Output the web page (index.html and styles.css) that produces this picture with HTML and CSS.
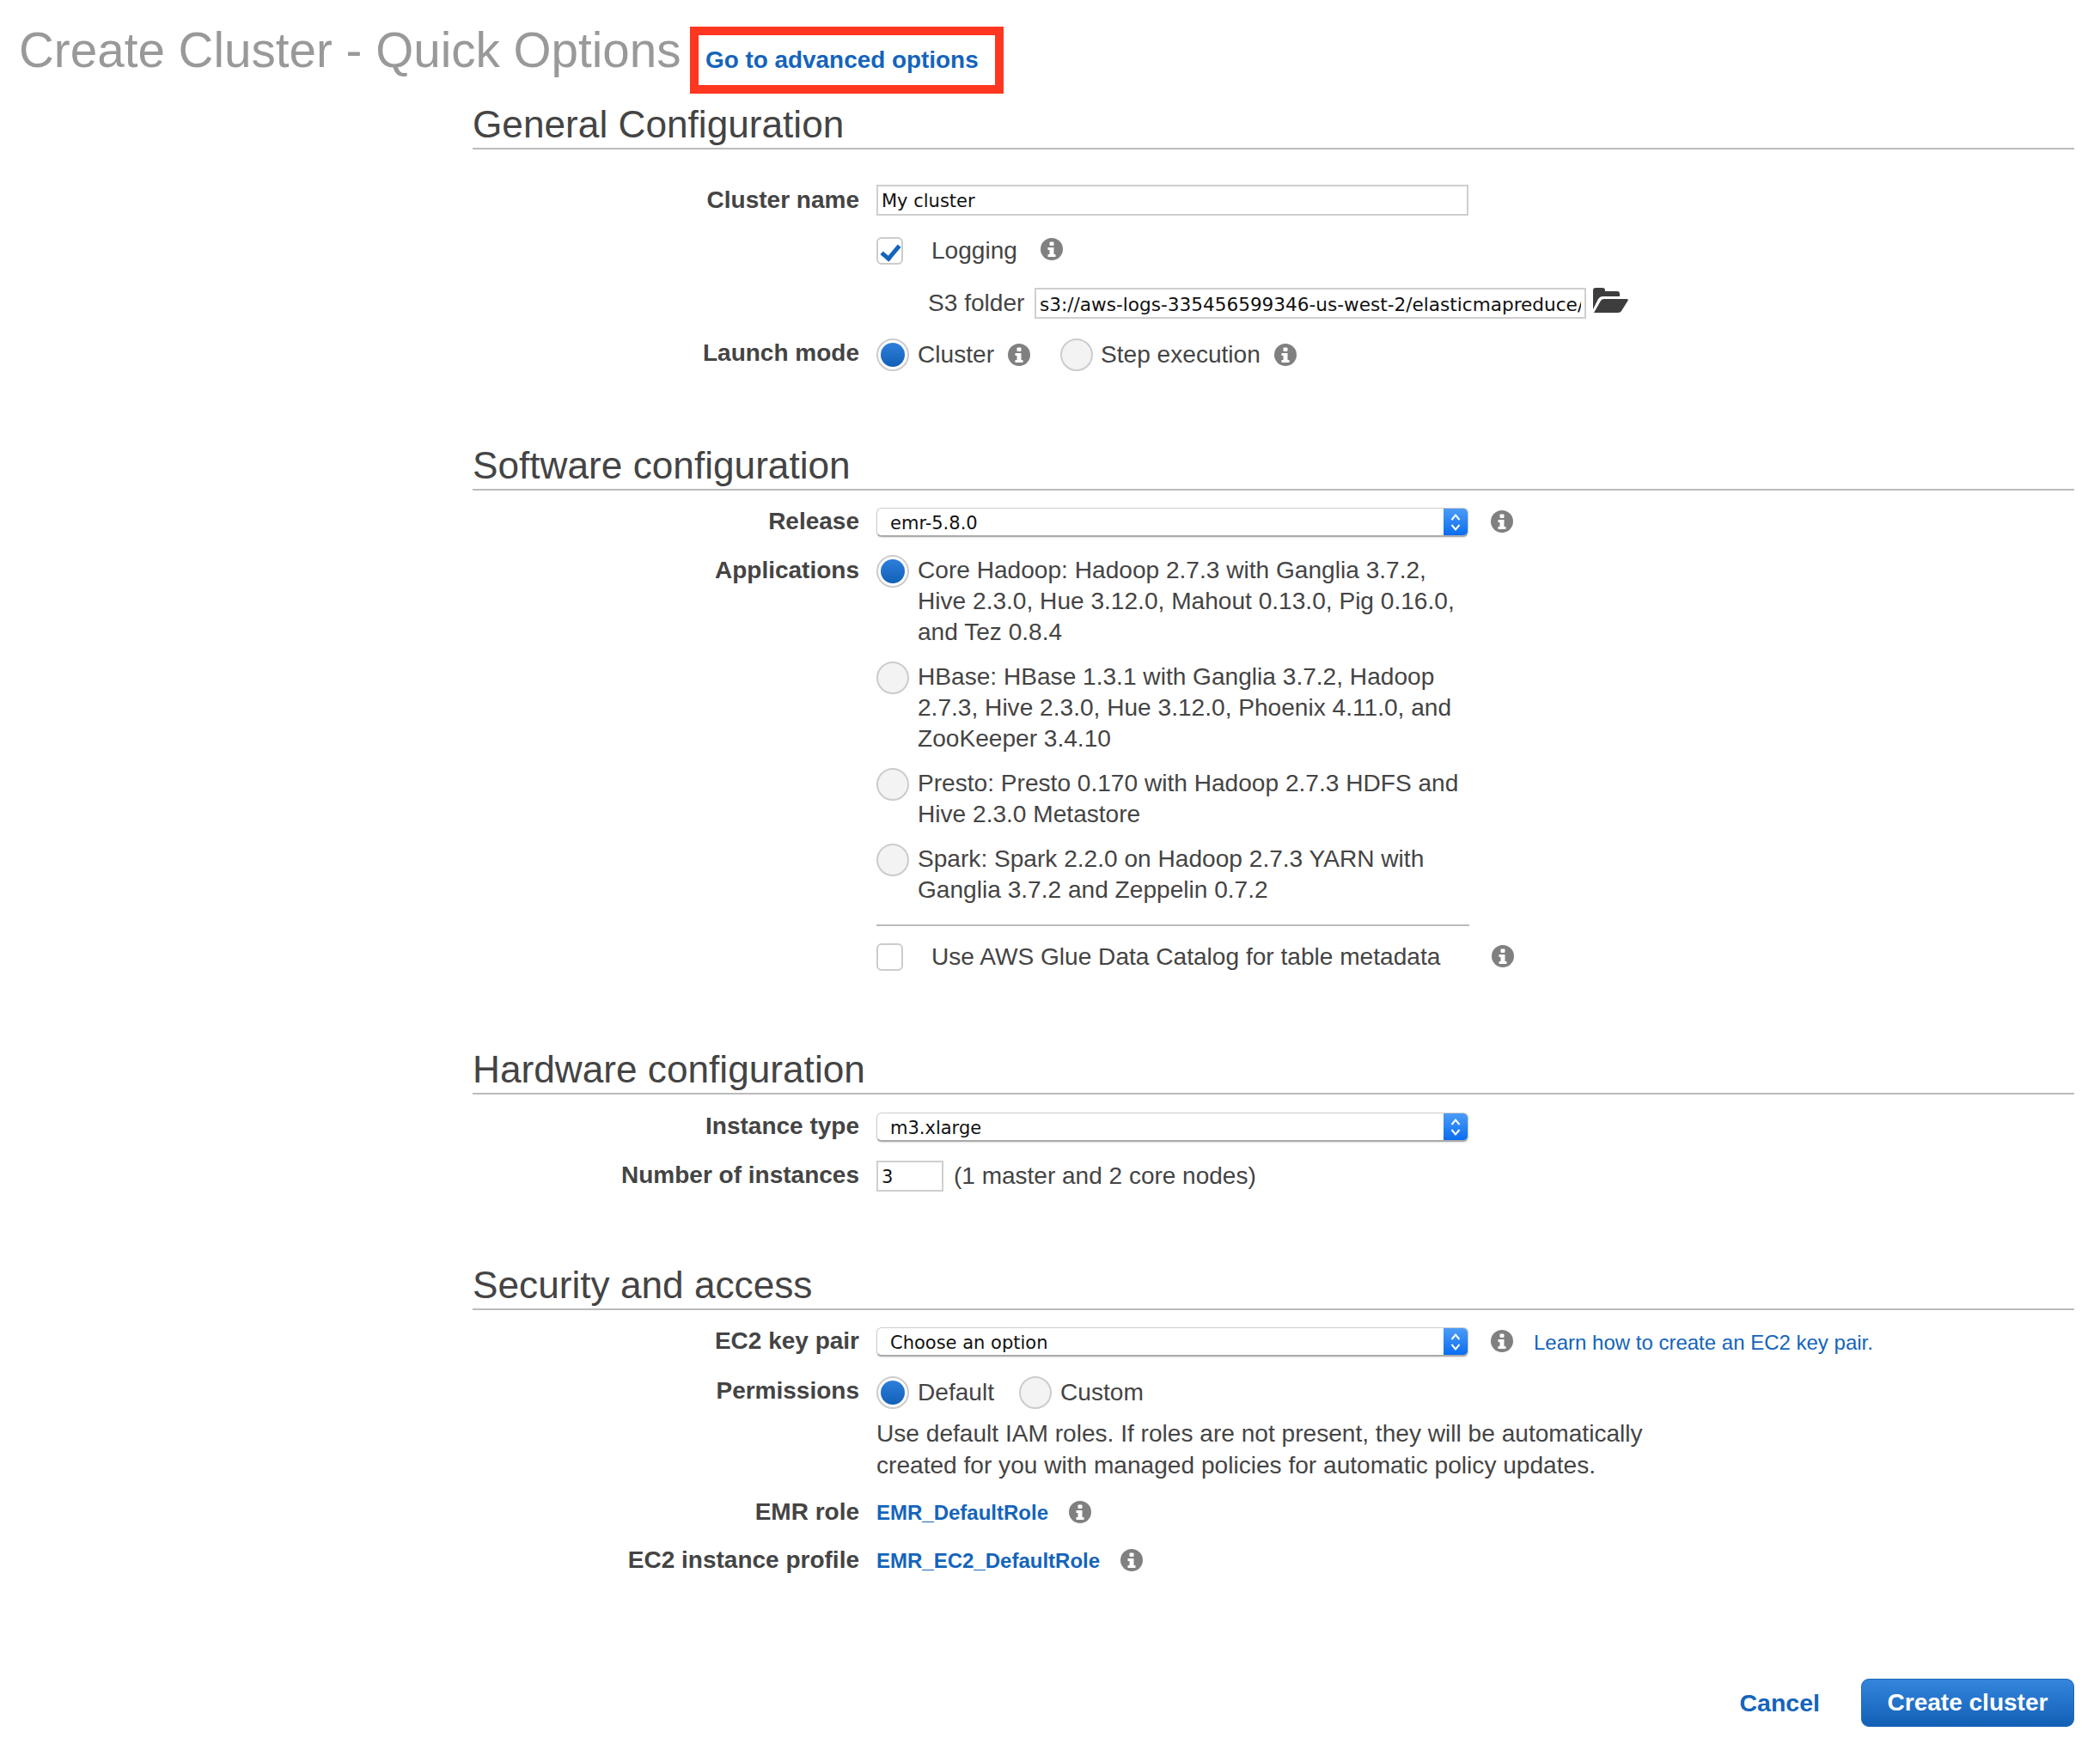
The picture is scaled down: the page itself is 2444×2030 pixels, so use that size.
FILE: index.html
```html
<!DOCTYPE html>
<html lang="en">
<head>
    <meta charset="UTF-8">
    <title>Create Cluster - Quick Options</title>
    <link rel="stylesheet" href="styles.css">
</head>
<body>

<svg class="icon-defs" width="0" height="0">
    <symbol id="info" viewBox="0 0 26 26">
        <circle cx="13" cy="13" r="13" fill="#808080"/>
        <rect x="10.5" y="4.5" width="5" height="4.5" rx="1" fill="#fff"/>
        <path d="M8.5 11h7v8h2v3h-9v-3h2v-5h-2z" fill="#fff"/>
    </symbol>
</svg>

<div class="page-header">
    <h1>Create Cluster - Quick Options</h1>
    <div class="advanced-box"><a href="#">Go to advanced options</a></div>
</div>

<section class="section section-general">
    <h2>General Configuration</h2>
    <div class="row row-name">
        <label>Cluster name</label>
        <div class="value"><input class="text-input wide" type="text" value="My cluster"></div>
    </div>
    <div class="row row-logging">
        <span></span>
        <div class="value">
            <input class="check" type="checkbox" checked>
            <span class="check-text">Logging</span>
            <svg class="info info-logging"><use href="#info"/></svg>
        </div>
    </div>
    <div class="row row-s3">
        <span></span>
        <div class="value s3-value">
            <span class="s3-label">S3 folder</span>
            <input class="text-input s3-input" type="text" value="s3://aws-logs-335456599346-us-west-2/elasticmapreduce/">
            <svg class="folder" viewBox="0 0 41 29">
                <path d="M0 25V3q0-3 3-3h8q3 0 3 3v1h14q3 0 3 3v3H11q-3 0-5 3z" fill="#3d3d3d"/>
                <path d="M1 29l8-14q1-2 4-2h26q2.500 0 1.500 2L33 27q-1 2-4 2z" fill="#3d3d3d"/>
            </svg>
        </div>
    </div>
    <div class="row row-launch">
        <label>Launch mode</label>
        <div class="value">
            <input class="radio" type="radio" name="mode" checked>
            <span class="radio-text">Cluster</span>
            <svg class="info info-cluster"><use href="#info"/></svg>
            <input class="radio radio-step" type="radio" name="mode">
            <span class="radio-text">Step execution</span>
            <svg class="info info-step"><use href="#info"/></svg>
        </div>
    </div>
</section>

<section class="section section-software">
    <h2>Software configuration</h2>
    <div class="row row-select">
        <label>Release</label>
        <div class="value">
            <div class="select"><span class="select-text">emr-5.8.0</span><span class="select-arrow"><svg viewBox="0 0 14 24"><path d="M2.500 9L7 3.500 11.500 9M2.500 15L7 20.500 11.500 15" fill="none" stroke="#fff" stroke-width="2"/></svg></span></div>
            <svg class="info info-select"><use href="#info"/></svg>
        </div>
    </div>
    <div class="row row-apps">
        <label>Applications</label>
        <div class="apps">
            <div class="app">
                <input class="radio" type="radio" name="app" checked>
                <span>Core Hadoop: Hadoop 2.7.3 with Ganglia 3.7.2,<br>Hive 2.3.0, Hue 3.12.0, Mahout 0.13.0, Pig 0.16.0,<br>and Tez 0.8.4</span>
            </div>
            <div class="app">
                <input class="radio" type="radio" name="app">
                <span>HBase: HBase 1.3.1 with Ganglia 3.7.2, Hadoop<br>2.7.3, Hive 2.3.0, Hue 3.12.0, Phoenix 4.11.0, and<br>ZooKeeper 3.4.10</span>
            </div>
            <div class="app">
                <input class="radio" type="radio" name="app">
                <span>Presto: Presto 0.170 with Hadoop 2.7.3 HDFS and<br>Hive 2.3.0 Metastore</span>
            </div>
            <div class="app">
                <input class="radio" type="radio" name="app">
                <span>Spark: Spark 2.2.0 on Hadoop 2.7.3 YARN with<br>Ganglia 3.7.2 and Zeppelin 0.7.2</span>
            </div>
            <div class="apps-rule"></div>
            <div class="glue">
                <input class="check" type="checkbox">
                <span class="check-text">Use AWS Glue Data Catalog for table metadata</span>
                <svg class="info info-glue"><use href="#info"/></svg>
            </div>
        </div>
    </div>
</section>

<section class="section section-hardware">
    <h2>Hardware configuration</h2>
    <div class="row row-select">
        <label>Instance type</label>
        <div class="value">
            <div class="select"><span class="select-text">m3.xlarge</span><span class="select-arrow"><svg viewBox="0 0 14 24"><path d="M2.500 9L7 3.500 11.500 9M2.500 15L7 20.500 11.500 15" fill="none" stroke="#fff" stroke-width="2"/></svg></span></div>
        </div>
    </div>
    <div class="row row-count">
        <label>Number of instances</label>
        <div class="value">
            <input class="text-input count-input" type="text" value="3">
            <span class="count-text">(1 master and 2 core nodes)</span>
        </div>
    </div>
</section>

<section class="section section-security">
    <h2>Security and access</h2>
    <div class="row row-select">
        <label>EC2 key pair</label>
        <div class="value">
            <div class="select"><span class="select-text">Choose an option</span><span class="select-arrow"><svg viewBox="0 0 14 24"><path d="M2.500 9L7 3.500 11.500 9M2.500 15L7 20.500 11.500 15" fill="none" stroke="#fff" stroke-width="2"/></svg></span></div>
            <svg class="info info-select"><use href="#info"/></svg>
            <a class="learn-link" href="#">Learn how to create an EC2 key pair.</a>
        </div>
    </div>
    <div class="row row-permissions">
        <label>Permissions</label>
        <div class="value">
            <input class="radio" type="radio" name="perm" checked>
            <span class="radio-text">Default</span>
            <input class="radio radio-custom" type="radio" name="perm">
            <span class="radio-text">Custom</span>
        </div>
    </div>
    <div class="row row-desc">
        <span></span>
        <p class="desc">Use default IAM roles. If roles are not present, they will be automatically<br>created for you with managed policies for automatic policy updates.</p>
    </div>
    <div class="row row-role">
        <label>EMR role</label>
        <div class="value">
            <a class="role-link" href="#">EMR_DefaultRole</a>
            <svg class="info info-role"><use href="#info"/></svg>
        </div>
    </div>
    <div class="row row-role row-profile">
        <label>EC2 instance profile</label>
        <div class="value">
            <a class="role-link" href="#">EMR_EC2_DefaultRole</a>
            <svg class="info info-role"><use href="#info"/></svg>
        </div>
    </div>
</section>

<div class="footer">
    <a class="cancel" href="#">Cancel</a>
    <button class="create" type="button">Create cluster</button>
</div>

</body>
</html>
```

FILE: styles.css
```css
body {
    font-family: "Liberation Sans", Arial, sans-serif;
    font-size: 28.1px;
    color: #444;
    margin: 0;
    background: #fff;
}
a {
    color: #1464bb;
    text-decoration: none;
}
.icon-defs {
    display: block;
    height: 0;
}
.page-header {
    display: flex;
    align-items: center;
    height: 78px;
    padding: 31px 0 0 22px;
}
h1 {
    font-size: 56.6px;
    font-weight: normal;
    color: #999;
    margin: -24px 0 0;
    width: 781px;
    white-space: nowrap;
}
.advanced-box {
    box-sizing: border-box;
    width: 365px;
    height: 78px;
    border: 10px solid #ff3620;
    padding: 0 0 0 8px;
    line-height: 58px;
    font-size: 27.9px;
    font-weight: bold;
    white-space: nowrap;
}
.section {
    margin: 0 30px 0 550px;
}
.section-software { margin-top: 74px; }
.section-hardware { margin-top: 79px; }
.section-security { margin-top: 73px; }
h2 {
    box-sizing: border-box;
    height: 65px;
    margin: 0;
    padding-top: 11px;
    font-size: 44.2px;
    line-height: 50px;
    font-weight: normal;
    color: #444;
    border-bottom: 2px solid #bbb;
    white-space: nowrap;
}
.row {
    display: grid;
    grid-template-columns: 450px 1fr;
    column-gap: 20px;
}
.row label {
    font-size: 28px;
    text-align: right;
    font-weight: bold;
    margin-top: -2px;
    align-self: center;
}
.value {
    display: flex;
    align-items: center;
}
.row-name { margin-top: 41px; height: 36px; }
.row-name label { margin-top: 0; }
.row-logging { margin-top: 25px; height: 32px; }
.row-s3 { margin-top: 27px; height: 36px; }
.row-launch { margin-top: 23px; height: 38px; }
.row-launch label { margin-top: -4px; }
.row-select { margin-top: 20px; height: 34px; }
.row-apps { margin-top: 21px; }
.row-apps label { align-self: start; line-height: 36px; margin-top: 0; }
.row-count { margin-top: 22px; height: 36px; }
.row-permissions { margin-top: 23px; height: 38px; }
.row-permissions label { margin-top: -4px; }
.row-desc { margin-top: 10px; }
.row-role { margin-top: 19px; height: 36px; }
.row-profile { margin-top: 20px; }
.section-hardware .row-select { margin-top: 21px; }

.text-input {
    box-sizing: border-box;
    height: 36px;
    border: 2px solid #cfcfcf;
    padding: 2px 4px 0;
    margin: 0;
    font-family: "DejaVu Sans", sans-serif;
    font-size: 21px;
    color: #111;
    background: #fff;
    outline: none;
}
.wide { width: 689px; }
.s3-value { padding-left: 60px; }
.s3-label { width: 124px; white-space: nowrap; }
.s3-input { width: 642px; font-size: 21.6px; }
.folder {
    width: 41px;
    height: 29px;
    margin: -7px 0 0 8px;
}
.count-input { width: 78px; }
.count-text { margin-left: 12px; font-size: 28px; }

.check, .radio {
    appearance: none;
    margin: 0;
    flex: none;
    box-sizing: border-box;
    border: 2px solid #ccc;
}
.check {
    position: relative;
    width: 31px;
    height: 32px;
    border-radius: 6px;
    background: #fff;
}
.check:checked::after {
    content: "";
    position: absolute;
    left: 8px;
    top: 3px;
    width: 8px;
    height: 17px;
    border: solid #1464bb;
    border-width: 0 5px 5px 0;
    transform: rotate(40deg);
}
.check-text {
    margin-left: 33px;
    white-space: nowrap;
}
.radio {
    position: relative;
    width: 38px;
    height: 38px;
    border-radius: 50%;
    background: #f3f3f3;
}
.radio:checked {
    background: #fff;
}
.radio:checked::after {
    content: "";
    position: absolute;
    left: 3px;
    top: 3px;
    width: 28px;
    height: 28px;
    border-radius: 50%;
    background: linear-gradient(#2d7fdc, #1260b6);
}
.radio-text {
    margin-left: 10px;
    white-space: nowrap;
}
.radio-custom { margin-left: 29px; }

.info {
    flex: none;
    width: 26px;
    height: 26px;
}
.info-logging { margin: -4px 0 0 27px; }
.info-cluster { margin: 0 0 0 16px; }
.radio-step { margin-left: 35px; }
.radio-step + .radio-text { margin-left: 9px; }
.info-step { margin: 0 0 0 16px; }
.info-select { margin: -3px 0 0 26px; }
.info-glue { margin: -3px 0 0 auto; }
.info-role { margin: -2px 0 0 24px; }

.select {
    box-sizing: border-box;
    display: flex;
    justify-content: space-between;
    width: 689px;
    height: 34px;
    border: 1px solid #ccc;
    border-bottom: 2px solid #aaa;
    border-radius: 6px;
    background: #fff;
    overflow: hidden;
    box-shadow: 0 1px 2px rgba(0, 0, 0, 0.12);
}
.select-text {
    padding: 1px 0 0 15px;
    font-family: "DejaVu Sans", sans-serif;
    font-size: 21px;
    line-height: 32px;
    color: #111;
}
.select-arrow {
    width: 28px;
    background: linear-gradient(#4b9cf8, #0a6df0);
    display: flex;
    justify-content: center;
    align-items: center;
}
.select-arrow svg {
    width: 14px;
    height: 24px;
}
.learn-link {
    margin: 2px 0 0 24px;
    font-size: 24px;
    white-space: nowrap;
}

.apps { width: 742px; }
.app {
    display: grid;
    grid-template-columns: 48px 1fr;
    line-height: 36px;
    margin-bottom: 16px;
    width: 690px;
    white-space: nowrap;
}
.apps-rule {
    width: 690px;
    height: 2px;
    margin-top: 22px;
    background: #bbb;
}
.glue {
    display: flex;
    align-items: center;
    height: 32px;
    margin-top: 20px;
}
.desc {
    margin: 0;
    line-height: 37px;
    white-space: nowrap;
}
.role-link {
    font-size: 24px;
    font-weight: bold;
    white-space: nowrap;
}

.footer {
    display: flex;
    justify-content: flex-end;
    align-items: center;
    margin: 119px 30px 0 0;
    height: 56px;
}
.cancel {
    font-size: 28.5px;
    font-weight: bold;
    margin-right: 48px;
}
.create {
    box-sizing: border-box;
    width: 248px;
    height: 56px;
    border: 1px solid #1a66b8;
    border-radius: 9px;
    background: linear-gradient(#3585dd, #1260b6);
    color: #fff;
    font-family: inherit;
    font-size: 28px;
    font-weight: bold;
    padding: 0;
}
```
